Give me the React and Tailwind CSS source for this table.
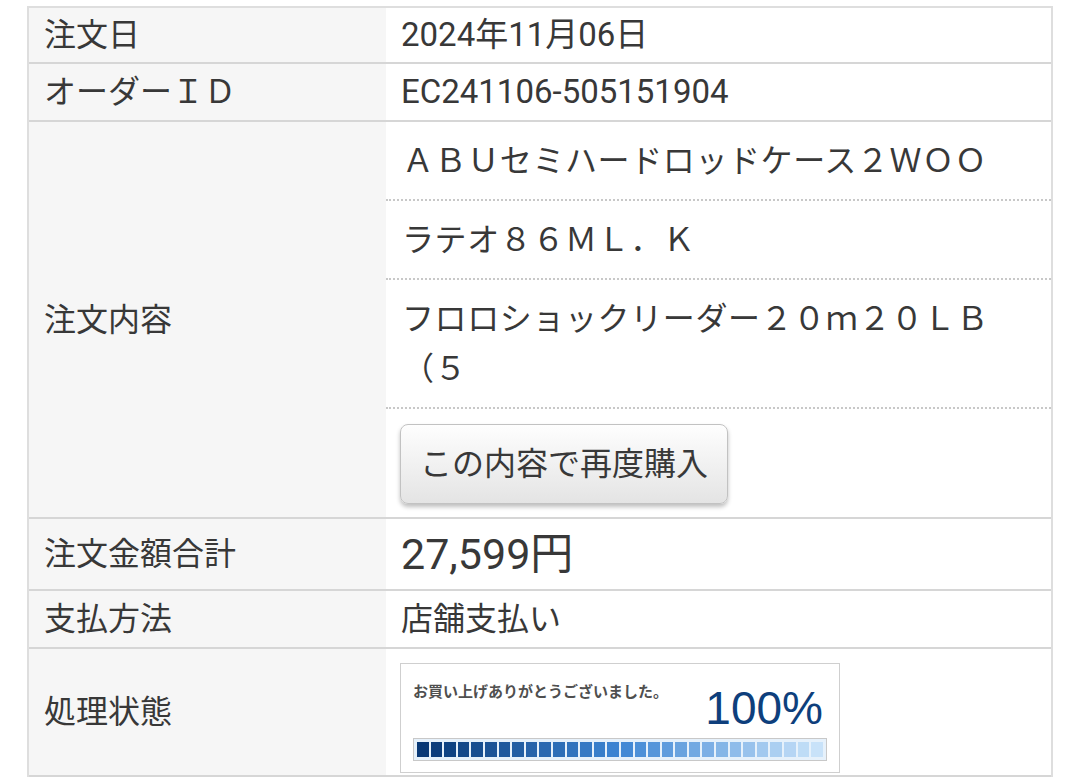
import React from "react";

const font = { fontFamily: '"Roboto", "Noto Sans CJK JP", "Noto Sans", sans-serif' };

const SEGMENTS = 30;
const stops = [
  [8, 56, 118],
  [62, 134, 212],
  [200, 226, 249],
];

const segColor = (i) => {
  const t = i / (SEGMENTS - 1);
  const [a, b, u] = t < 0.5 ? [stops[0], stops[1], t * 2] : [stops[1], stops[2], (t - 0.5) * 2];
  const c = a.map((v, k) => Math.round(v + (b[k] - v) * u));
  return `rgb(${c[0]}, ${c[1]}, ${c[2]})`;
};

const Row = ({ label, children }) => (
  <div className="flex border-b-2 border-[#d6d6d6]">
    <div className="w-[357px] shrink-0 bg-[#f6f6f6] flex items-center pl-[15px] text-[32px] text-[#383838]">
      {label}
    </div>
    <div className="flex-1 bg-white text-[#383838]">{children}</div>
  </div>
);

export default function App() {
  const items = [
    ["ＡＢＵセミハードロッドケース２ＷＯＯ"],
    ["ラテオ８６ＭＬ．Ｋ"],
    ["フロロショックリーダー２０ｍ２０ＬＢ", "（５"],
  ];

  return (
    <div className="w-[1080px] h-[783px] bg-white px-[27px] pt-[6px] overflow-hidden" style={font}>
      <div className="border-2 border-b-0 border-[#dedede]">
        <Row label="注文日">
          <div className="h-[54px] flex items-center pl-[15px] text-[33px]">2024年11月06日</div>
        </Row>

        <Row label="オーダーＩＤ">
          <div className="h-[56px] flex items-center pl-[15px] text-[33px]">EC241106-505151904</div>
        </Row>

        <Row label="注文内容">
          {items.map((lines, i) => (
            <div
              key={i}
              className="pl-[16px] pt-[14px] pb-[13px] text-[32px] leading-[50px] tracking-[0.6px] border-b-2 border-dotted border-[#c8c8c8]"
            >
              {lines.map((l, j) => (
                <div key={j}>{l}</div>
              ))}
            </div>
          ))}
          <div className="pl-[14px] pt-[15px] pb-[13px]">
            <button className="w-[328px] h-[80px] rounded-[8px] border border-[#c2c2c2] bg-gradient-to-b from-[#fefefe] to-[#e4e4e4] shadow-[0_3px_4px_rgba(0,0,0,0.25)] text-[32px] text-[#383838]">
              この内容で再度購入
            </button>
          </div>
        </Row>

        <Row label="注文金額合計">
          <div className="h-[70px] flex items-center pl-[15px] text-[43px]">27,599円</div>
        </Row>

        <Row label="支払方法">
          <div className="h-[56px] flex items-center pl-[15px] text-[32px]">店舗支払い</div>
        </Row>

        <Row label="処理状態">
          <div className="h-[126px] pl-[14px] pt-[14px]">
            <div className="w-[440px] h-[110px] border border-[#cfcfcf] bg-white px-[12px] pt-[18px]">
              <div className="flex items-start justify-between">
                <span className="text-[15px] font-bold text-[#4f4f4f] leading-[20px]">
                  お買い上げありがとうございました。
                </span>
                <span
                  className="text-[46px] leading-[44px] text-[#0e3f7c] mr-[4px] mt-[4px]"
                  style={{ fontFamily: '"Liberation Sans", Arial, sans-serif' }}
                >
                  100%
                </span>
              </div>
              <div className="mt-[8px] h-[23px] border border-[#c8c8c8] bg-[#e6f1fb] p-[3px] flex gap-[2px]">
                {Array.from({ length: SEGMENTS }).map((_, i) => (
                  <div key={i} className="flex-1" style={{ backgroundColor: segColor(i) }} />
                ))}
              </div>
            </div>
          </div>
        </Row>
      </div>
    </div>
  );
}
